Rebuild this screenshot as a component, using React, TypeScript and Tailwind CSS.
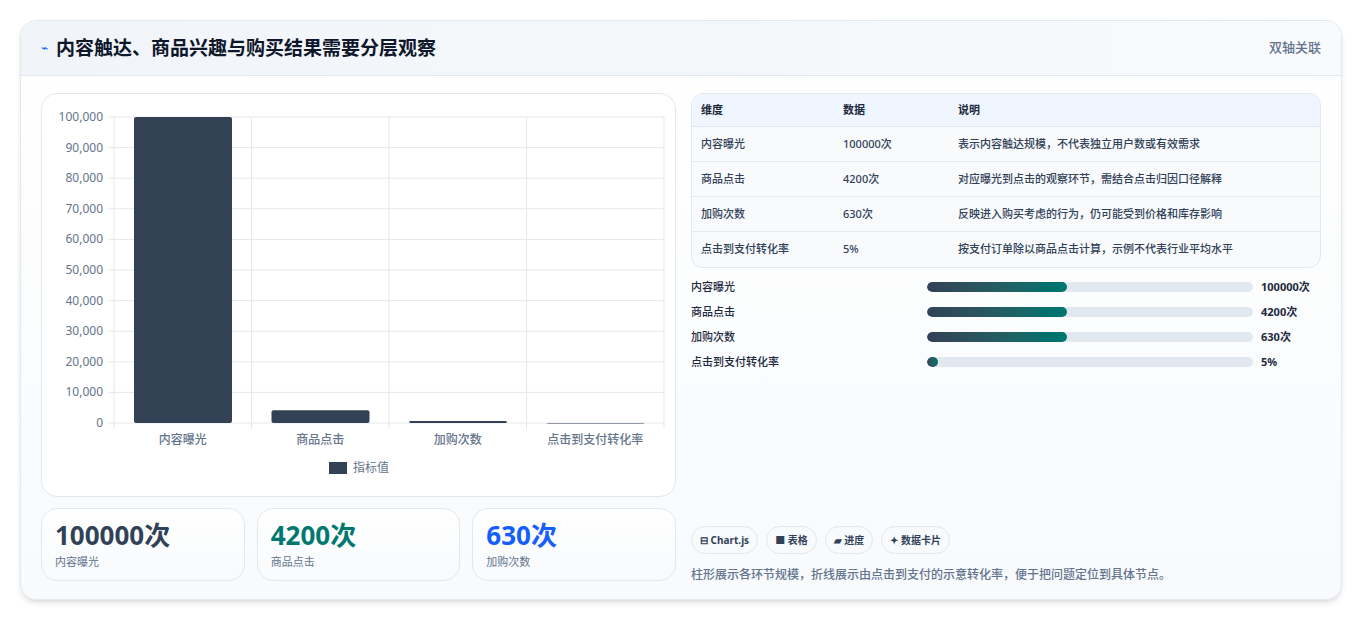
import React from "react";

const font = { fontFamily: '"Noto Sans", "Noto Sans CJK SC", sans-serif' };

const rows = [
  { k: "内容曝光", v: "100000次", d: "表示内容触达规模，不代表独立用户数或有效需求", w: 43 },
  { k: "商品点击", v: "4200次", d: "对应曝光到点击的观察环节，需结合点击归因口径解释", w: 43 },
  { k: "加购次数", v: "630次", d: "反映进入购买考虑的行为，仍可能受到价格和库存影响", w: 43 },
  { k: "点击到支付转化率", v: "5%", d: "按支付订单除以商品点击计算，示例不代表行业平均水平", w: 3.4 },
];

const Chart = () => {
  const x0 = 72, x1 = 622, yTop = 23, yBot = 329;
  const ticks = [0, 1, 2, 3, 4, 5, 6, 7, 8, 9, 10];
  const vals = [100000, 4200, 630, 5];
  const labels = ["内容曝光", "商品点击", "加购次数", "点击到支付转化率"];
  const cw = (x1 - x0) / 4;
  return (
    <svg width="634" height="402" className="block" style={font}>
      {ticks.map((t) => {
        const y = yBot - ((yBot - yTop) * t) / 10;
        return (
          <g key={t}>
            <line x1={x0 - 6} x2={x1} y1={y} y2={y} stroke="#e5e7eb" />
            <text x={61} y={y + 4} textAnchor="end" fontSize="12" fill="#64748b">
              {(t * 10000).toLocaleString("en-US")}
            </text>
          </g>
        );
      })}
      {[0, 1, 2, 3, 4].map((i) => (
        <line key={i} x1={x0 + cw * i} x2={x0 + cw * i} y1={yTop} y2={yBot + 6} stroke="#e5e7eb" />
      ))}
      {vals.map((v, i) => {
        const h = ((yBot - yTop) * v) / 100000;
        return (
          <rect key={i} x={x0 + cw * i + 20} y={yBot - h} width={98} height={Math.max(h, 0.6)} rx="2" fill="#334155" />
        );
      })}
      {labels.map((l, i) => (
        <text key={l} x={x0 + cw * i + cw / 2} y={350} textAnchor="middle" fontSize="12" fill="#64748b" fontWeight="500">
          {l}
        </text>
      ))}
      <rect x={287} y={368} width={18} height={12} fill="#334155" />
      <text x={311} y={378} fontSize="12" fill="#64748b">指标值</text>
    </svg>
  );
};

export default function App() {
  return (
    <div className="w-[1363px] h-[621px] bg-white pt-5 px-5" style={font}>
      <div className="w-[1322px] h-[580px] rounded-2xl border border-slate-200 shadow-md overflow-hidden bg-gradient-to-b from-white to-slate-50">
        <div className="h-[55px] flex items-center justify-between px-5 bg-gradient-to-r from-slate-100 to-slate-50 border-b border-slate-200">
          <div className="flex items-center gap-2">
            <span className="text-blue-600 text-xs">⌁</span>
            <span className="text-[19px] font-bold text-slate-900">内容触达、商品兴趣与购买结果需要分层观察</span>
          </div>
          <span className="text-[13px] text-slate-500 font-medium">双轴关联</span>
        </div>
        <div className="flex gap-[15px] px-5 pt-[17px]">
          <div className="w-[635px] flex flex-col gap-[11px]">
            <div className="h-[404px] rounded-2xl border border-slate-200 bg-white">
              <Chart />
            </div>
            <div className="flex gap-3">
              {[
                { v: "100000次", l: "内容曝光", c: "text-slate-700" },
                { v: "4200次", l: "商品点击", c: "text-teal-700" },
                { v: "630次", l: "加购次数", c: "text-blue-600" },
              ].map((s) => (
                <div key={s.l} className="flex-1 h-[73px] rounded-2xl border border-slate-200 bg-gradient-to-b from-white to-slate-50 px-[13px] pt-[9px]">
                  <div className={`text-[26px] font-bold leading-[34px] ${s.c}`}>{s.v}</div>
                  <div className="text-[11px] text-slate-500 mt-[2px]">{s.l}</div>
                </div>
              ))}
            </div>
          </div>
          <div className="flex-1 flex flex-col">
            <div className="rounded-xl border border-slate-200 overflow-hidden text-[11px] bg-slate-50">
              <div className="flex h-[33px] items-center bg-blue-50 border-b border-slate-200 font-bold text-slate-800">
                <div className="w-[151px] pl-[9px]">维度</div>
                <div className="w-[115px]">数据</div>
                <div>说明</div>
              </div>
              {rows.map((r, i) => (
                <div key={r.k} className={`flex h-[35px] items-center font-medium text-slate-700 ${i < 3 ? "border-b border-slate-200" : ""}`}>
                  <div className="w-[151px] pl-[9px]">{r.k}</div>
                  <div className="w-[115px]">{r.v}</div>
                  <div>{r.d}</div>
                </div>
              ))}
            </div>
            <div className="flex flex-col gap-[11px] mt-[12px]">
              {rows.map((r) => (
                <div key={r.k} className="flex items-center h-[14px] text-[11px] font-medium text-slate-800">
                  <div className="w-[236px]">{r.k}</div>
                  <div className="w-[326px] h-[10px] rounded-full bg-slate-200 overflow-hidden">
                    <div className="h-full rounded-full bg-gradient-to-r from-slate-700 to-teal-700" style={{ width: `${r.w}%` }} />
                  </div>
                  <div className="ml-[8px] font-bold">{r.v}</div>
                </div>
              ))}
            </div>
            <div className="flex gap-2 mt-[157px]">
              {["⊟ Chart.js", "■ 表格", "▰ 进度", "✦ 数据卡片"].map((c) => (
                <span key={c} className="h-[28px] px-[8px] flex items-center rounded-full border border-slate-200 bg-slate-50 text-[10px] font-bold text-slate-700">
                  {c}
                </span>
              ))}
            </div>
            <div className="mt-[12px] text-[12px] text-slate-500 font-medium">
              柱形展示各环节规模，折线展示由点击到支付的示意转化率，便于把问题定位到具体节点。
            </div>
          </div>
        </div>
      </div>
    </div>
  );
}
